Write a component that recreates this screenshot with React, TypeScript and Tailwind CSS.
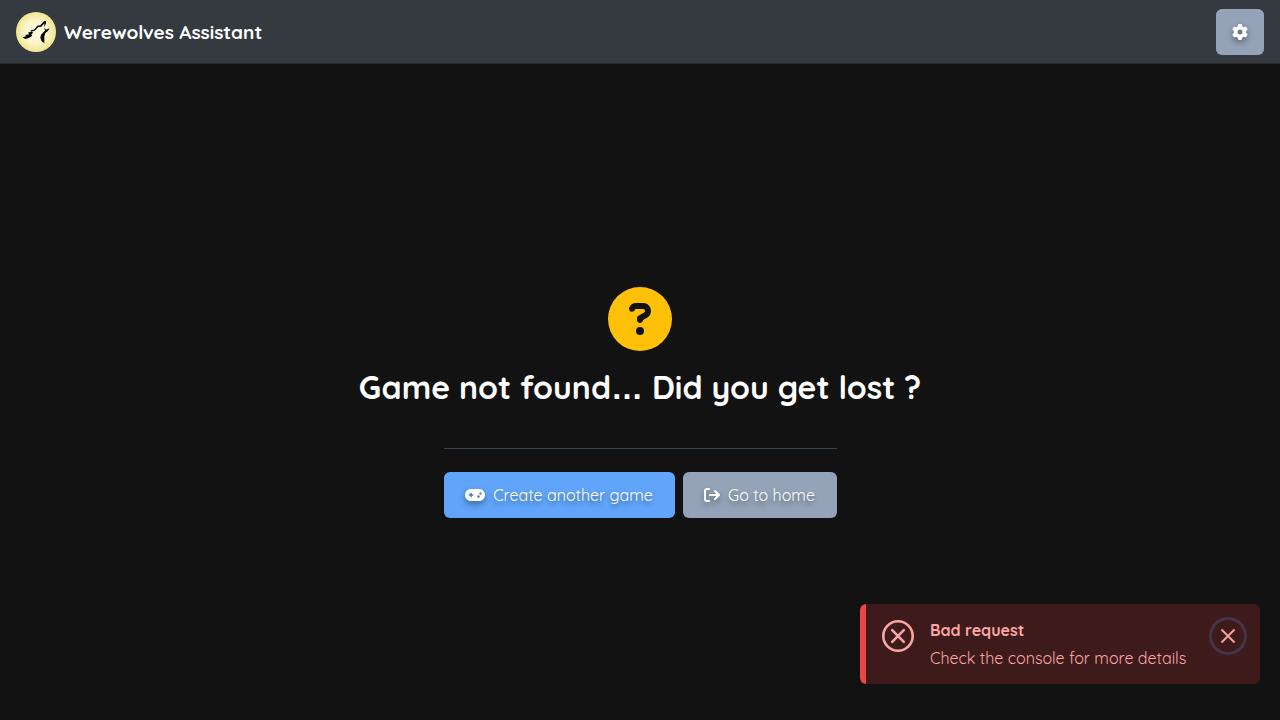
import { useState } from "react";
import { FaArrowRightFromBracket, FaCircleQuestion, FaGamepad, FaGear } from "react-icons/fa6";

function WolfLogo() {
  return (
    <svg viewBox="0 0 120 120" className="size-10 shrink-0" aria-hidden="true">
      <defs>
        <radialGradient id="moon">
          <stop offset="0" stopColor="#fffce6" />
          <stop offset="0.55" stopColor="#fcf6cc" />
          <stop offset="1" stopColor="#f1e490" />
        </radialGradient>
      </defs>
      <circle cx="60" cy="60" r="60" fill="url(#moon)" />
      <path
        d="M20 76 L31 73 L27 69 L40 67 L36 62 L47 58 L44 54 L54 53 L64 41 L73 40 L85 26 L90 28 L90 34 L85 46 L85 34 L76 44 L67 45 L56 56 L46 59 L52 62 L46 67 L49 71 L38 78 L28 81 Z"
        fill="#000"
      />
      <path d="M85 46 L90 53 L101 49 L95 58 L88 63 L85 73 L85 94 L77 88 L73 77 L75 68 L83 60 L87 56 Z" fill="#000" />
    </svg>
  );
}

function Header() {
  return (
    <header className="flex h-16 items-center justify-between border-b border-[#2b2b2b] bg-[#343a40] px-4">
      <a href="/" className="flex items-center gap-2 text-[19px] font-bold">
        <WolfLogo />
        <span className="pt-px">Werewolves Assistant</span>
      </a>
      <button
        type="button"
        aria-label="Settings"
        className="flex h-[46px] w-12 items-center justify-center rounded-md bg-[#94a3b8]"
      >
        <FaGear className="size-4 drop-shadow-[0_3px_3px_rgba(0,0,0,0.4)]" />
      </button>
    </header>
  );
}

function Toast({ onClose }: { onClose: () => void }) {
  return (
    <div
      role="alert"
      className="fixed right-5 bottom-9 flex w-[400px] items-start gap-4 rounded-md border-l-6 border-[#ef4444] bg-[#3d1b1b] py-4 pr-4 pl-4 text-[#fca5a5]"
    >
      <svg viewBox="0 0 32 32" className="size-8 shrink-0" fill="none" stroke="currentColor" aria-hidden="true">
        <circle cx="16" cy="16" r="14.7" strokeWidth="2.6" />
        <path d="M10.2 10.2 21.8 21.8M21.8 10.2 10.2 21.8" strokeWidth="2.6" strokeLinecap="round" />
      </svg>
      <div className="flex-1 whitespace-nowrap">
        <p className="text-base leading-5 font-bold">Bad request</p>
        <p className="mt-2 text-base leading-5">Check the console for more details</p>
      </div>
      <button
        type="button"
        aria-label="Close"
        onClick={onClose}
        className="flex size-8 shrink-0 items-center justify-center rounded-full ring-3 ring-[#45334a]"
      >
        <svg viewBox="0 0 14 14" className="size-3.5" fill="none" stroke="currentColor" aria-hidden="true">
          <path d="M1 1 13 13M13 1 1 13" strokeWidth="1.8" strokeLinecap="round" />
        </svg>
      </button>
    </div>
  );
}

export default function App() {
  const [toastVisible, setToastVisible] = useState(true);

  return (
    <div className="flex min-h-screen flex-col bg-[#121212] font-['Quicksand','Lato',sans-serif] text-white">
      <Header />
      <main className="flex flex-1 flex-col items-center justify-center pt-5">
        <FaCircleQuestion className="size-16 text-[#ffc107]" />
        <h1 className="mt-4 text-center text-[32px] leading-10 font-bold">
          Game not found<span className="font-['Liberation_Sans',sans-serif] leading-none">…</span> Did you get lost ?
        </h1>
        <div className="mt-[41px] border-t border-[#374450] pt-[23px]">
          <div className="flex gap-2 text-base text-shadow-[0_3px_5px_rgba(0,0,0,0.4)]">
            <a href="/game-lobby" className="flex h-[46px] w-[231px] items-center justify-center gap-2 rounded-md bg-[#60a5fa]">
              <FaGamepad className="size-5 drop-shadow-[0_3px_3px_rgba(0,0,0,0.4)]" />
              <span>Create another game</span>
            </a>
            <a href="/" className="flex h-[46px] w-[154px] items-center justify-center gap-2 rounded-md bg-[#94a3b8]">
              <FaArrowRightFromBracket className="size-4 drop-shadow-[0_3px_3px_rgba(0,0,0,0.4)]" />
              <span>Go to home</span>
            </a>
          </div>
        </div>
      </main>
      {toastVisible && <Toast onClose={() => setToastVisible(false)} />}
    </div>
  );
}
